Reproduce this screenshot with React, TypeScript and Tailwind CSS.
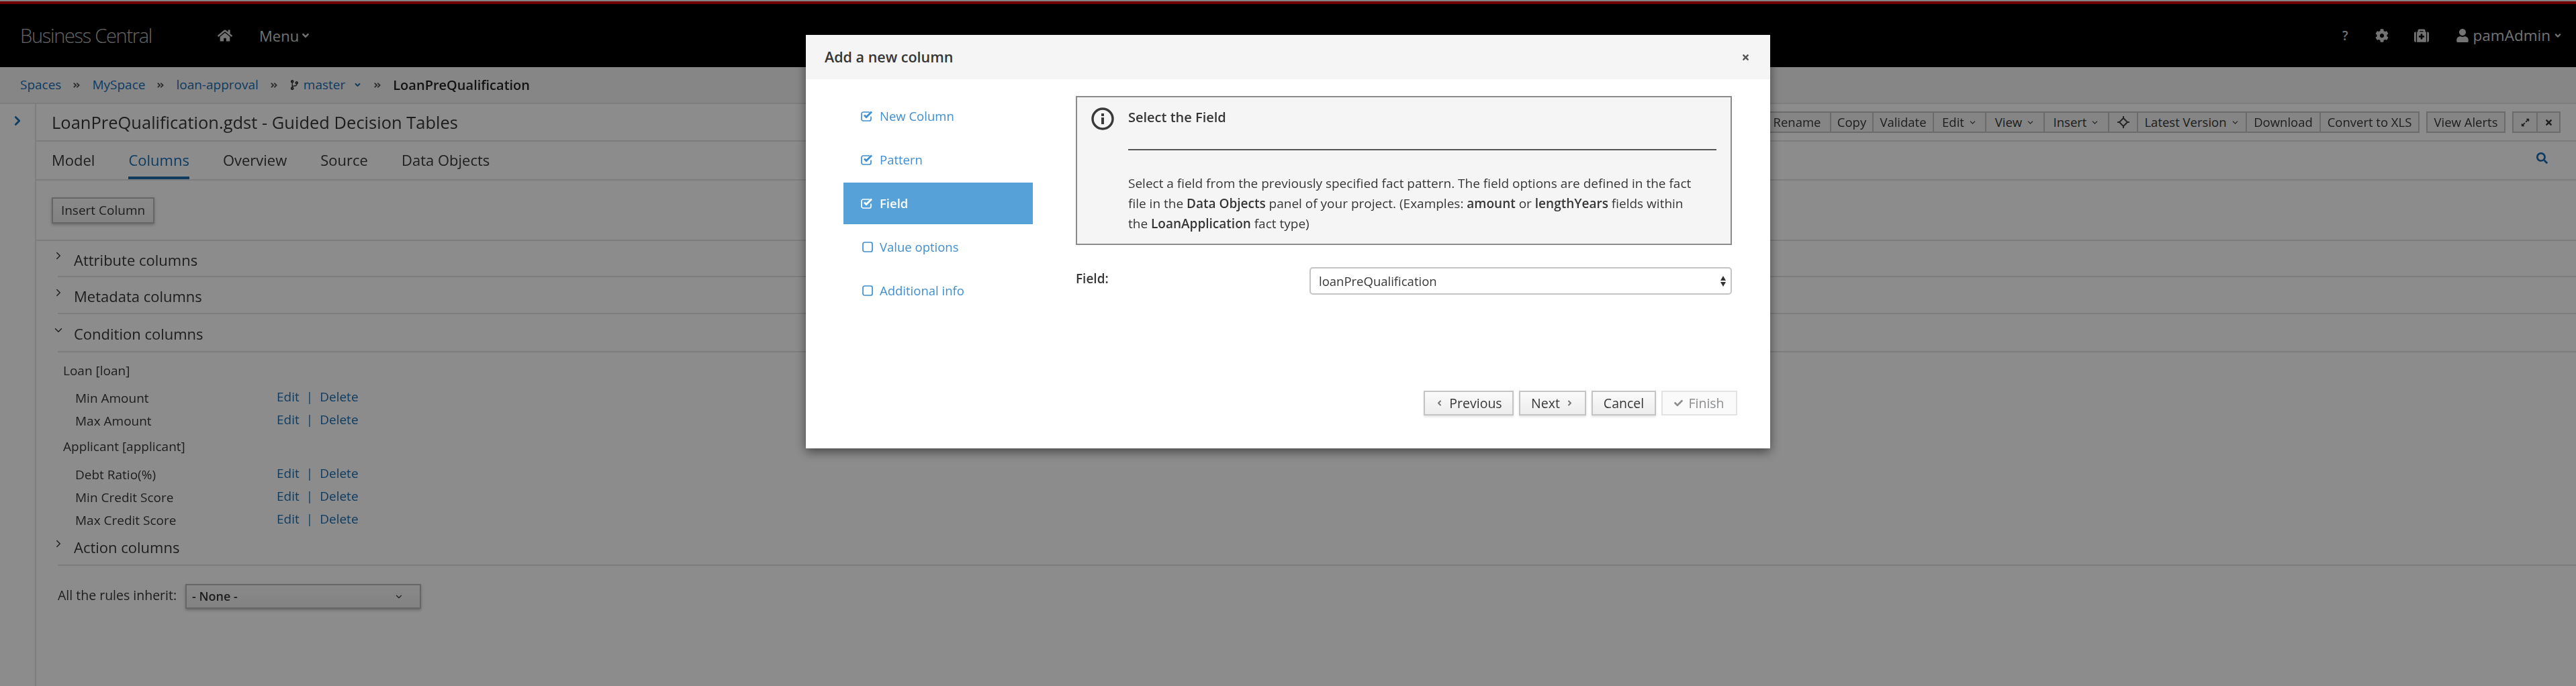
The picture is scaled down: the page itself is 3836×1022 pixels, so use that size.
import type { ReactNode } from "react";
import { clsx } from "clsx";
import { ChevronDown, ChevronRight } from "lucide-react";
import {
  FaAngleDoubleRight,
  FaAngleDown,
  FaAngleLeft,
  FaAngleRight,
  FaCheck,
  FaCodeBranch,
  FaCog,
  FaExpandAlt,
  FaHome,
  FaMedkit,
  FaSearch,
  FaTimes,
  FaUser,
} from "react-icons/fa";

const toolbar = [
  { label: "Rename", width: "w-[100px]" },
  { label: "Copy", width: "w-[63px]" },
  { label: "Validate", width: "w-[90px]" },
  { label: "Edit", width: "w-[78px]", caret: true },
  { label: "View", width: "w-[87px]", caret: true },
  { label: "Insert", width: "w-[96px]", caret: true },
  { label: "", width: "w-[43px]", target: true },
  { label: "Latest Version", width: "w-[162px]", caret: true },
  { label: "Download", width: "w-[110px]" },
  { label: "Convert to XLS", width: "w-[147px]" },
];

const tabs = ["Model", "Columns", "Overview", "Source", "Data Objects"];

const steps = [
  { label: "New Column", done: true },
  { label: "Pattern", done: true },
  { label: "Field", done: true, active: true },
  { label: "Value options", done: false },
  { label: "Additional info", done: false },
];

function Crumb({ children }: { children: ReactNode }) {
  return <span className="text-[#1a6cb0]">{children}</span>;
}

function Sep() {
  return <FaAngleDoubleRight className="mx-[17px] size-[12px] text-[#555]" />;
}

function Section({ label, open, className }: { label: string; open?: boolean; className?: string }) {
  return (
    <div className={clsx("ml-[32px] flex items-center border-b-2 border-[#e4e4e4] pt-[4px]", className)}>
      <div className="-ml-[8px] flex w-[32px] shrink-0 -translate-y-[6px] items-center">
        {open ? <ChevronDown size={18} strokeWidth={2} /> : <ChevronRight size={18} strokeWidth={2} />}
      </div>
      <span className="text-[22px] text-[#363636]">{label}</span>
    </div>
  );
}

function ColumnRow({ label }: { label: string }) {
  return (
    <div className="flex h-[34px] items-center pl-[58px] text-[19px] text-[#363636]">
      <span className="w-[300px] translate-y-[2px]">{label}</span>
      <span className="flex items-center text-[#1a6cb0]">
        Edit<span className="mx-[10px]">|</span>Delete
      </span>
    </div>
  );
}

function FooterButton({ children, className, disabled }: { children: ReactNode; className: string; disabled?: boolean }) {
  return (
    <button
      className={clsx(
        "flex h-[37px] items-center justify-center gap-[8px] border-2 text-[19.5px]",
        disabled
          ? "border-[#e3e3e3] bg-[#fafafa] text-[#8b8d8f]"
          : "border-[#c4c4c4] bg-[linear-gradient(#fafafa,#ededed)] text-[#363636] shadow-[0_2px_3px_rgba(0,0,0,0.12)]",
        className,
      )}
    >
      {children}
    </button>
  );
}

function StepIcon({ done }: { done: boolean }) {
  return (
    <svg viewBox="0 0 19 16" className="h-[16px] w-[19px] shrink-0" fill="none">
      {done ? (
        <>
          <path
            d="M15 8.5v4A2.5 2.5 0 0 1 12.5 15h-9A2.5 2.5 0 0 1 1 12.5v-8A2.5 2.5 0 0 1 3.5 2H13"
            stroke="currentColor"
            strokeWidth="1.7"
          />
          <path d="M5 6.5l3 3 8-8" stroke="currentColor" strokeWidth="2.8" />
        </>
      ) : (
        <rect x="3" y="1" width="14" height="14" rx="2.5" stroke="currentColor" strokeWidth="1.7" />
      )}
    </svg>
  );
}

export default function App() {
  return (
    <div className="relative h-[1022px] w-[3836px] overflow-hidden bg-white font-['Open_Sans',sans-serif] text-[#363636] blur-[0.5px]">
      {/* page under the backdrop */}
      <div className="h-full blur-[0.5px]">
        <div className="h-[2px] bg-[#f0f0f0]" />
        <div className="h-[4px] bg-[#cc0000]" />
        <header className="flex h-[94px] items-center bg-black text-[#d1d1d1]">
          <span className="ml-[30px] w-[294px] text-[29px] font-light tracking-[-1.3px] text-[#b8b8b8]">Business Central</span>
          <FaHome className="size-[22px]" />
          <span className="ml-[40px] text-[22px]">Menu</span>
          <FaAngleDown className="ml-[2px] size-[16px]" />
          <div className="ml-auto flex items-center pr-[20px]">
            <span className="text-[19px] font-semibold">?</span>
            <FaCog className="ml-[40px] size-[20px]" />
            <FaMedkit className="ml-[38px] size-[22px]" />
            <FaUser className="ml-[40px] size-[20px]" />
            <span className="ml-[6px] text-[22.5px]">pamAdmin</span>
            <FaAngleDown className="ml-[4px] size-[14px]" />
          </div>
        </header>
        <div className="flex h-[55px] items-center border-b-2 border-[#e4e4e4] bg-[#f5f5f5] pl-[30px] text-[19px]">
          <Crumb>Spaces</Crumb>
          <Sep />
          <Crumb>MySpace</Crumb>
          <Sep />
          <Crumb>loan-approval</Crumb>
          <Sep />
          <FaCodeBranch className="mr-[6px] size-[15px] text-[#363636]" />
          <Crumb>master</Crumb>
          <FaAngleDown className="ml-[12px] size-[13px] text-[#1a6cb0]" />
          <Sep />
          <span className="text-[20px] font-semibold text-[#222]">LoanPreQualification</span>
        </div>
        <div className="flex h-[867px]">
          <div className="flex w-[54px] shrink-0 justify-center border-r-2 border-[#e4e4e4] pt-[14px]">
            <ChevronRight size={22} strokeWidth={3} className="text-[#1a6cb0]" />
          </div>
          <div className="min-w-0 flex-1">
            <div className="flex h-[56px] items-center border-b-2 border-[#e4e4e4] pl-[23px] pr-[23px]">
              <span className="text-[25.5px]">LoanPreQualification.gdst - Guided Decision Tables</span>
              <div className="ml-auto flex items-center text-[18.5px]">
                <div className="flex h-[32px] border-b-2 border-t-2 border-[#c4c4c4]">
                  {toolbar.map((item) => (
                    <div
                      key={item.label || "target"}
                      className={clsx("flex items-center justify-center gap-[6px] border-r-2 border-[#c4c4c4] bg-[#f2f2f2]", item.width)}
                    >
                      {item.label}
                      {item.caret && <ChevronDown size={13} strokeWidth={2} />}
                      {item.target && (
                        <svg viewBox="0 0 18 18" className="size-[18px]" fill="none" stroke="#444" strokeWidth="2">
                          <path d="M9 3l6 6-6 6-6-6z" />
                          <path d="M9 0v3M9 15v3M0 9h3M15 9h3" />
                        </svg>
                      )}
                    </div>
                  ))}
                </div>
                <div className="ml-[10px] flex h-[32px] w-[118px] items-center justify-center border-2 border-[#c4c4c4] bg-[#f2f2f2]">
                  View Alerts
                </div>
                <div className="ml-[10px] flex h-[32px] border-2 border-[#c4c4c4] bg-[#f2f2f2]">
                  <div className="flex w-[36px] items-center justify-center border-r-2 border-[#c4c4c4]">
                    <FaExpandAlt className="size-[13px]" />
                  </div>
                  <div className="flex w-[32px] items-center justify-center">
                    <FaTimes className="size-[13px]" />
                  </div>
                </div>
              </div>
            </div>
            <div className="flex h-[58px] items-stretch gap-[50px] border-b-2 border-[#e4e4e4] pl-[23px] pr-[42px] text-[22px]">
              {tabs.map((tab) => (
                <div
                  key={tab}
                  className={clsx(
                    "flex items-center border-b-4 pt-[2px]",
                    tab === "Columns" ? "border-[#1a6cb0] text-[#1a6cb0]" : "border-transparent",
                  )}
                >
                  {tab}
                </div>
              ))}
              <div className="ml-auto flex items-center">
                <FaSearch className="size-[17px] -translate-y-[4px] text-[#1a6cb0]" />
              </div>
            </div>
            <div className="flex h-[90px] items-start border-b-2 border-[#e4e4e4] pl-[23px] pt-[25px]">
              <button className="h-[39px] w-[153px] border-2 border-[#bbb] bg-[linear-gradient(#fafafa,#ededed)] text-[19px] shadow-[0_2px_4px_rgba(0,0,0,0.25)]">
                Insert Column
              </button>
            </div>
            <Section label="Attribute columns" className="h-[54px]" />
            <Section label="Metadata columns" className="h-[55px]" />
            <Section label="Condition columns" open className="h-[57px]" />
            <div className="pt-[9px]">
              <div className="flex h-[36px] items-center pl-[40px] text-[19px]">Loan [loan]</div>
              <div className="h-[4px]" />
              <ColumnRow label="Min Amount" />
              <ColumnRow label="Max Amount" />
              <div className="flex h-[46px] items-center pl-[40px] text-[19px]">Applicant [applicant]</div>
              <ColumnRow label="Debt Ratio(%)" />
              <ColumnRow label="Min Credit Score" />
              <ColumnRow label="Max Credit Score" />
            </div>
            <Section label="Action columns" className="h-[53px] pb-[4px]" />
            <div className="flex items-center pl-[32px] pt-[27px] text-[19.5px]">
              <span className="w-[190px] -translate-y-[2px]">All the rules inherit:</span>
              <div className="flex h-[37px] w-[351px] items-center justify-between border-2 border-[#bbb] bg-[linear-gradient(#fafafa,#ededed)] pl-[8px] pr-[24px] text-[18px] font-semibold shadow-[0_2px_4px_rgba(0,0,0,0.25)]">
                - None -
                <ChevronDown size={14} strokeWidth={2} />
              </div>
            </div>
          </div>
        </div>
      </div>

      {/* backdrop */}
      <div className="absolute inset-0 bg-black/[0.45]" />

      {/* wizard modal */}
      <div className="absolute left-[1200px] top-[52px] h-[616px] w-[1436px] bg-white shadow-[0_5px_15px_rgba(0,0,0,0.5)]">
        <div className="flex h-[66px] items-center justify-between bg-[#f5f5f5] pl-[28px] pr-[30px]">
          <span className="text-[21.5px] font-semibold">Add a new column</span>
          <FaTimes className="size-[13px] text-[#555]" />
        </div>
        <div className="flex h-[464px]">
          <div className="ml-[56px] flex w-[282px] shrink-0 flex-col gap-[3px] pt-[24px] text-[18.5px]">
            {steps.map((step) => (
              <div
                key={step.label}
                className={clsx(
                  "flex h-[62px] items-center pl-[26px]",
                  step.active ? "bg-[#56a2d8] font-semibold text-white" : "text-[#3f8fd0]",
                )}
              >
                <StepIcon done={step.done} />
                <span className="ml-[9px]">{step.label}</span>
              </div>
            ))}
          </div>
          <div className="ml-[64px] w-[977px] pt-[25px]">
            <div className="flex h-[222px] border-2 border-[#8b8b8b] bg-[#f5f5f5] pl-[21px] pr-[21px]">
              <svg viewBox="0 0 34 34" className="mt-[15px] size-[34px] shrink-0 text-[#3a3a3a]">
                <circle cx="17" cy="17" r="15" fill="none" stroke="currentColor" strokeWidth="3.5" />
                <rect x="15" y="15" width="4" height="10" fill="currentColor" />
                <rect x="15" y="9" width="4" height="4" fill="currentColor" />
              </svg>
              <div className="ml-[21px] flex-1">
                <div className="h-[79px] border-b-2 border-[#555] pt-[17px] text-[20px] font-semibold leading-[26px]">
                  Select the Field
                </div>
                <p className="whitespace-nowrap pt-[34px] text-[19px] leading-[30px]">
                  Select a field from the previously specified fact pattern. The field options are defined in the fact
                  <br />
                  file in the <b className="font-semibold">Data Objects</b> panel of your project. (Examples:{" "}
                  <b className="font-semibold">amount</b> or <b className="font-semibold">lengthYears</b> fields within
                  <br />
                  the <b className="font-semibold">LoanApplication</b> fact type)
                </p>
              </div>
            </div>
            <div className="mt-[33px] flex items-center">
              <span className="w-[348px] -translate-y-[3px] text-[19px] font-semibold">Field:</span>
              <div className="flex h-[41px] flex-1 items-center justify-between rounded-[5px] border-2 border-[#c4c4c4] pl-[12px] pr-[7px] text-[18.5px]">
                loanPreQualification
                <span className="flex flex-col">
                  <span className="h-0 w-0 border-x-[4px] border-b-[7px] border-x-transparent border-b-[#333]" />
                  <span className="mt-[2px] h-0 w-0 border-x-[4px] border-t-[7px] border-x-transparent border-t-[#333]" />
                </span>
              </div>
            </div>
          </div>
        </div>
        <div className="flex justify-end gap-[8px] pr-[49px]">
          <FooterButton className="w-[134px]">
            <FaAngleLeft className="size-[13px] text-[#777]" />
            Previous
          </FooterButton>
          <FooterButton className="w-[100px]">
            Next
            <FaAngleRight className="size-[13px] text-[#777]" />
          </FooterButton>
          <FooterButton className="w-[96px]">Cancel</FooterButton>
          <FooterButton className="w-[113px]" disabled>
            <FaCheck className="size-[13px]" />
            Finish
          </FooterButton>
        </div>
      </div>
    </div>
  );
}
